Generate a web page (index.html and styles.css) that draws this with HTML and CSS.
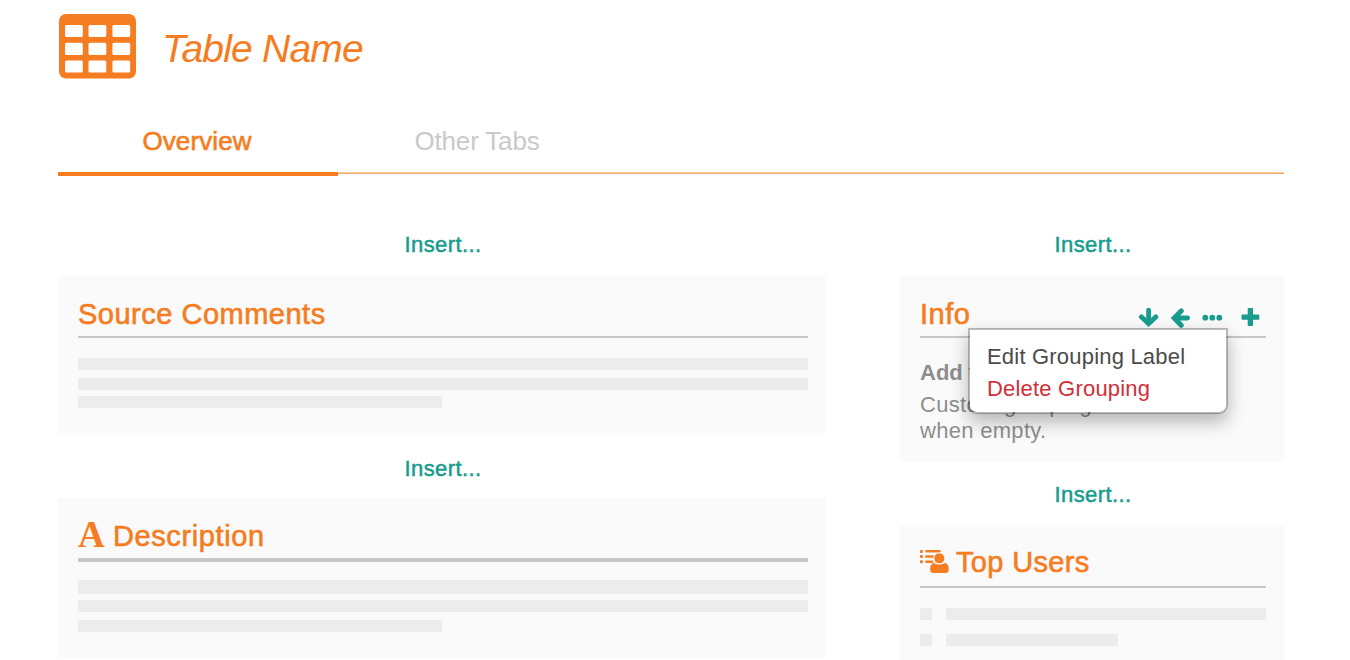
FILE: index.html
```html
<!DOCTYPE html>
<html lang="en">
<head>
<meta charset="utf-8">
<title>Table Name</title>
<link rel="stylesheet" href="styles.css">
</head>
<body>
<div class="page">
  <header class="title-bar">
    <svg class="table-icon" width="78" height="66" viewBox="0 0 78 66">
      <rect x="1" y="1" width="77" height="64.5" rx="7" fill="#f57c20"/>
      <g fill="#fff">
        <rect x="7" y="12" width="17.8" height="12" rx="1.5"/><rect x="30.5" y="12" width="17.8" height="12" rx="1.5"/><rect x="54.4" y="12" width="17.8" height="12" rx="1.5"/>
        <rect x="7" y="29.7" width="17.8" height="12.2" rx="1.5"/><rect x="30.5" y="29.7" width="17.8" height="12.2" rx="1.5"/><rect x="54.4" y="29.7" width="17.8" height="12.2" rx="1.5"/>
        <rect x="7" y="47.6" width="17.8" height="12" rx="1.5"/><rect x="30.5" y="47.6" width="17.8" height="12" rx="1.5"/><rect x="54.4" y="47.6" width="17.8" height="12" rx="1.5"/>
      </g>
    </svg>
    <h1 class="title">Table Name</h1>
  </header>

  <nav class="tabs">
    <a class="tab tab-active"><span>Overview</span></a>
    <a class="tab"><span class="tab-other">Other Tabs</span></a>
  </nav>

  <main class="columns">
    <div class="column column-main">
      <a class="insert insert-first"><span>Insert...</span></a>
      <section class="card card-comments">
        <h2 class="card-head"><span class="label label-comments">Source Comments</span></h2>
        <div class="bar"></div>
        <div class="bar bar-second"></div>
        <div class="bar bar-third bar-short"></div>
      </section>
      <a class="insert"><span>Insert...</span></a>
      <section class="card card-description">
        <h2 class="card-head card-head-thick"><span class="letter-icon">A</span><span class="label label-description">Description</span></h2>
        <div class="bar bar-tall"></div>
        <div class="bar bar-close"></div>
        <div class="bar bar-second bar-short"></div>
      </section>
    </div>

    <div class="column column-side">
      <a class="insert insert-first"><span>Insert...</span></a>
      <section class="card card-info">
        <h2 class="card-head"><span class="label label-info">Info</span>
          <svg class="actions" width="122" height="22" viewBox="0 0 122 22" fill="none" stroke="#179c8e" stroke-width="5">
            <path d="M10.600 4.200V17" stroke-linecap="round" stroke-width="4.800"/>
            <path d="M3.500 11L10.600 17.600L17.700 11" stroke-linecap="round" stroke-width="5"/>
            <path d="M49.600 12H38" stroke-linecap="round" stroke-width="4.800"/>
            <path d="M43.200 4.900L36.200 12L43.200 19.300" stroke-linecap="round" stroke-width="5"/>
            <g fill="#179c8e" stroke="none">
              <circle cx="67.300" cy="11.700" r="2.900"/><circle cx="74.300" cy="11.700" r="2.900"/><circle cx="81.300" cy="11.700" r="2.900"/>
              <rect x="103.500" y="8.400" width="17.800" height="5.300" rx="1"/>
              <rect x="109.700" y="2" width="5.300" height="18" rx="1"/>
            </g>
          </svg>
        </h2>
        <p class="info-title">Add to Group</p>
        <p class="info-text">Custom groupings are hidden<br>when empty.</p>
        <div class="menu">
          <a class="menu-item menu-edit">Edit Grouping Label</a>
          <a class="menu-item menu-delete">Delete Grouping</a>
        </div>
      </section>
      <a class="insert insert-side"><span>Insert...</span></a>
      <section class="card card-users">
        <h2 class="card-head card-head-users">
          <svg class="users-icon" width="30" height="26" viewBox="0 0 30 26" fill="#f57c20">
            <rect x="0" y="1" width="2.900" height="2.900" rx=".7"/><rect x="0" y="6.100" width="2.900" height="2.900" rx=".7"/><rect x="0" y="11.300" width="2.900" height="2.900" rx=".7"/>
            <rect x="5.200" y="1.100" width="15.500" height="2.500" rx="1"/><rect x="5.200" y="6.200" width="8.800" height="2.500" rx="1"/><rect x="5.200" y="11.400" width="8" height="2.500" rx="1"/>
            <circle cx="19.300" cy="9.300" r="5.500" stroke="#fafafa"/>
            <path d="M14 14C11 14.500 10.200 17.500 10.200 20.500C10.200 23 11.500 24 13.500 24H25.500C27.500 24 28.800 23 28.800 20.500C28.800 17.500 28 14.500 24.600 14C21.500 16 17.200 16 14 14Z"/>
          </svg>
          <span class="label label-users">Top Users</span>
        </h2>
        <div class="user-row"><i class="dot"></i><i class="line"></i></div>
        <div class="user-row"><i class="dot"></i><i class="line line-short"></i></div>
      </section>
    </div>
  </main>
</div>
</body>
</html>
```
FILE: styles.css
```css
* { box-sizing: border-box; }
body { margin: 0; background: #fff; font-family: "Liberation Sans", Arial, sans-serif; overflow: hidden; }
h1, h2, p { margin: 0; font-weight: 400; }
.page { width: 1350px; height: 660px; padding: 13px 66px 0 58px; overflow: hidden; }
.title-bar { display: flex; height: 67px; }
.title { margin-left: 26px; padding-top: 14px; font-size: 39px; line-height: 44px; font-style: italic; color: #f57c20; letter-spacing: -0.8px; white-space: nowrap; }
.tabs { display: flex; height: 96px; background: linear-gradient(#fbcda5, #fbcda5) 0 92px / 100% 1px no-repeat, linear-gradient(#f7a868, #f7a868) 0 93px / 100% 1px no-repeat; }
.tab { width: 280px; padding: 46px 2px 0 0; text-align: center; font-size: 26px; line-height: 30px; letter-spacing: -0.15px; color: #c9c9c9; white-space: nowrap; }
.tab-active { color: #f57c20; border-bottom: 4px solid #f57c20; letter-spacing: 0.1px; -webkit-text-stroke: 0.6px #f57c20; }
.columns { display: flex; justify-content: space-between; }
.column-main { width: 768px; }
.column-side { width: 384px; }
.insert { display: flex; justify-content: center; height: 64px; padding: 22px 0 0 2px; font-size: 22px; line-height: 26px; letter-spacing: 0.4px; color: #179c8e; -webkit-text-stroke: 0.5px #179c8e; }
.insert-first { height: 100px; padding-top: 56px; }
.insert-side { padding-top: 20px; }
.card { background: #fafafa; padding: 0 18px 0 20px; position: relative; }
.card-comments { height: 158px; }
.card-description { height: 160px; }
.card-info { height: 186px; }
.card-users { height: 134px; }
.card-head { display: flex; height: 62px; padding-top: 22px; border-bottom: 2px solid #c7c7c7; margin-bottom: 20px; font-size: 29px; line-height: 32px; color: #f57c20; white-space: nowrap; }
.card-head-thick { height: 64px; border-bottom-width: 4px; margin-bottom: 18px; }
.card-head-users { padding-top: 20px; }
.label { letter-spacing: 0.5px; -webkit-text-stroke: 0.6px #f57c20; }
.label-description { letter-spacing: 0.6px; }
.label-users { letter-spacing: 0.35px; }
.letter-icon { width: 35px; font-family: "Liberation Serif", serif; font-weight: 700; font-size: 37px; line-height: 30px; }
.actions { margin: 8px 6px 0 auto; }
.users-icon { margin: 3px 6px 0 0; }
.bar { height: 12px; background: #ececec; }
.bar-second { margin-top: 8px; }
.bar-third, .bar-close { margin-top: 6px; }
.bar-short { width: 364px; }
.bar-tall { height: 14px; }
.info-title { font-size: 22px; line-height: 26px; font-weight: 700; color: #8e8e8e; padding-top: 2px; }
.info-text { font-size: 22px; line-height: 26px; color: #8e8e8e; letter-spacing: 0.3px; margin-top: 6px; white-space: nowrap; }
.menu { position: absolute; left: 68px; top: 52px; width: 260px; height: 86px; padding: 11px 0 0 17px; background: #fff; background-clip: padding-box; border: 2px solid rgba(0, 0, 0, .25); border-radius: 0 0 9px 9px; box-shadow: 0 8px 18px rgba(0, 0, 0, .28); }
.menu-item { display: block; font-size: 22px; line-height: 32px; color: #4b4b4b; letter-spacing: 0.2px; white-space: nowrap; }
.menu-delete { color: #d22f37; }
.user-row { display: flex; gap: 14px; height: 12px; margin-bottom: 14px; }
.dot { width: 12px; background: #ececec; }
.line { width: 320px; background: #ececec; }
.line-short { width: 172px; }
```
